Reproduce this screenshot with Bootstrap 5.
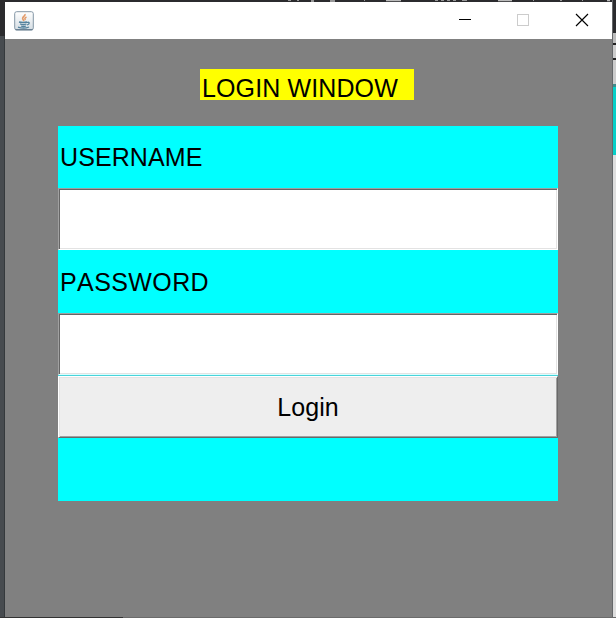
<!DOCTYPE html>
<html lang="en">
<head>
<meta charset="utf-8">
<meta name="viewport" content="width=device-width, initial-scale=1">
<title>Login</title>
<link href="https://cdn.jsdelivr.net/npm/bootstrap@5.3.0/dist/css/bootstrap.min.css" rel="stylesheet">
<style>
body { font-family: "Liberation Sans", Arial, sans-serif; font-size: 25px; line-height: 28px; font-kerning: none; color: #000; background: #2b2b2e; width: 616px; height: 618px; }
.desk-left { width: 5px; background: linear-gradient(to right, #474b4f 0 4px, #35393c 4px); margin-top: 36px; }
.desk-right { width: 4px; font-size: 0; border-left: 1px solid #66686a; }
.desk-right .strip-dark { height: 33px; background: #2b2b2e; }
.desk-right .strip-tabs { height: 54px; background: linear-gradient(#bcbcbc 0 10px, #222 10px 12px, #ccc 12px 25px, #222 25px 27px, #ccc 27px 51px, #3f8b8b 51px); }
.desk-right .strip-teal { height: 68px; background: #08cfc8; }
.desk-right .strip-light { background: #dedede; }
.desk-top { height: 2px; }
.app-window { width: 607px; height: 615px; background: #808080; }
.title-bar { height: 37px; padding-left: 9px; background: #fff; }
.caption-btn { width: 58px; height: 37px; }
.heading-label { width: 214px; height: 31px; margin-top: 30px; margin-left: 195px; padding: 5px 0 0 2px; background: #ff0; white-space: nowrap; letter-spacing: .12px; }
.form-panel { width: 500px; height: 375px; margin-top: 26px; margin-left: 53px; background: #0ff; }
.field-label { height: 62px; padding-left: 2px; letter-spacing: .1px; }
.field-label.tall { height: 63px; letter-spacing: .4px; }
.bevel-input { height: 62px; border: 1px solid #fff; border-top-color: #9ca0a0; border-left-color: #a0a0a0; border-radius: 0; box-shadow: inset 1px 1px #666, inset -1px -1px #e3e3e3; background: #fff; font-size: 25px; padding: 2px 6px; }
.bevel-input.pale-base { border-bottom-color: #d8ffff; }
.bevel-input:focus { border-color: #a0a0a0 #fff #fff #a0a0a0; box-shadow: inset 1px 1px #666, inset -1px -1px #e3e3e3; }
.divider { height: 1px; flex: none; background: #48d3da; }
.bevel-btn { height: 62px; padding: 0; border: 1px solid #fff; border-right-color: #696969; border-bottom-color: #696969; border-radius: 0; box-shadow: inset 1px 1px #e3e3e3, inset -1px -1px #a0a0a0; background: #eee; color: #000; font-size: 25px; line-height: 28px; letter-spacing: .1px; }
.bevel-btn:hover { background: #e8e8e8; color: #000; border-color: #fff #696969 #696969 #fff; }
.desk-bottom { height: 1px; background: linear-gradient(to right, #333 123px, #6b6b6b 123px); }
</style>
<script src="https://cdn.jsdelivr.net/npm/bootstrap@5.3.0/dist/js/bootstrap.bundle.min.js" defer></script>
</head>
<body class="d-flex flex-column overflow-hidden">
<div class="d-flex flex-grow-1">
  <div class="desk-left"></div>
  <div class="d-flex flex-column">
    <svg class="desk-top d-block" width="607" height="2" viewBox="0 0 607 2" aria-hidden="true">
      <path d="M283 0h3M292 0h2M306 1h3M325 1h5M359 0h1M381 .5h15M430 0h3M436 0h3M442 0h3M448 0h3M457 0h5M493 .5h14M528 0h1M555 0h2M577 0h1M602 .5h3" stroke="#bbb" stroke-width="1.5"/>
    </svg>
    <main class="app-window">
      <header class="title-bar d-flex align-items-center">
        <!-- Java coffee cup -->
        <svg width="20" height="20" viewBox="0 0 20 20" fill="none" aria-hidden="true">
          <defs><linearGradient id="tile" x2="0" y2="1"><stop stop-color="#fff"/><stop offset="1" stop-color="#d5dde3"/></linearGradient></defs>
          <rect x=".7" y=".7" width="18.6" height="18.2" rx="2" fill="url(#tile)" stroke="#8497a6"/>
          <path d="M1.5 18.8h17" stroke="#526b80"/>
          <path d="M11 3c1 2-4 3-2 5.500l1 1.500M12.500 6c-2 1-2 2-1 3" stroke="#e39a68" stroke-width="1.500"/>
          <path d="M5 11q4 1 8 0M6 13q3.500 1.300 6.500 0M7 15q2.500 1 5 0M13 11.500c3-1 3 1.500 0 2.500M4 16.200q6 2 11-.2" stroke="#55829d" stroke-width="1.300"/>
        </svg>
        <div class="d-flex ms-auto">
          <svg class="caption-btn" viewBox="0 0 58 37" shape-rendering="crispEdges" role="img" aria-label="Minimize"><path d="M21 17.500h12" stroke="#000"/></svg>
          <svg class="caption-btn" viewBox="0 0 58 37" shape-rendering="crispEdges" role="img" aria-label="Maximize"><path d="M21.500 12.500h11v11h-11z" fill="none" stroke="#ccc"/></svg>
          <svg class="caption-btn" viewBox="0 0 58 37" role="img" aria-label="Close"><path d="M22 12l12 12M34 12l-12 12" stroke="#000" stroke-width="1.150"/></svg>
        </div>
      </header>
      <div class="heading-label">LOGIN WINDOW</div>
      <form class="form-panel d-flex flex-column" onsubmit="return false">
        <label class="field-label d-flex align-items-center" for="user">USERNAME</label>
        <input class="form-control bevel-input" id="user" type="text">
        <label class="field-label tall d-flex align-items-center" for="pass">PASSWORD</label>
        <input class="form-control bevel-input pale-base" id="pass" type="password">
        <div class="divider"></div>
        <button class="btn bevel-btn w-100" type="submit">Login</button>
      </form>
    </main>
  </div>
  <div class="desk-right d-flex flex-column">
    <div class="strip-dark"></div>
    <div class="strip-tabs"></div>
    <div class="strip-teal"></div>
    <div class="strip-light flex-grow-1"></div>
  </div>
</div>
<div class="desk-bottom"></div>
</body>
</html>
